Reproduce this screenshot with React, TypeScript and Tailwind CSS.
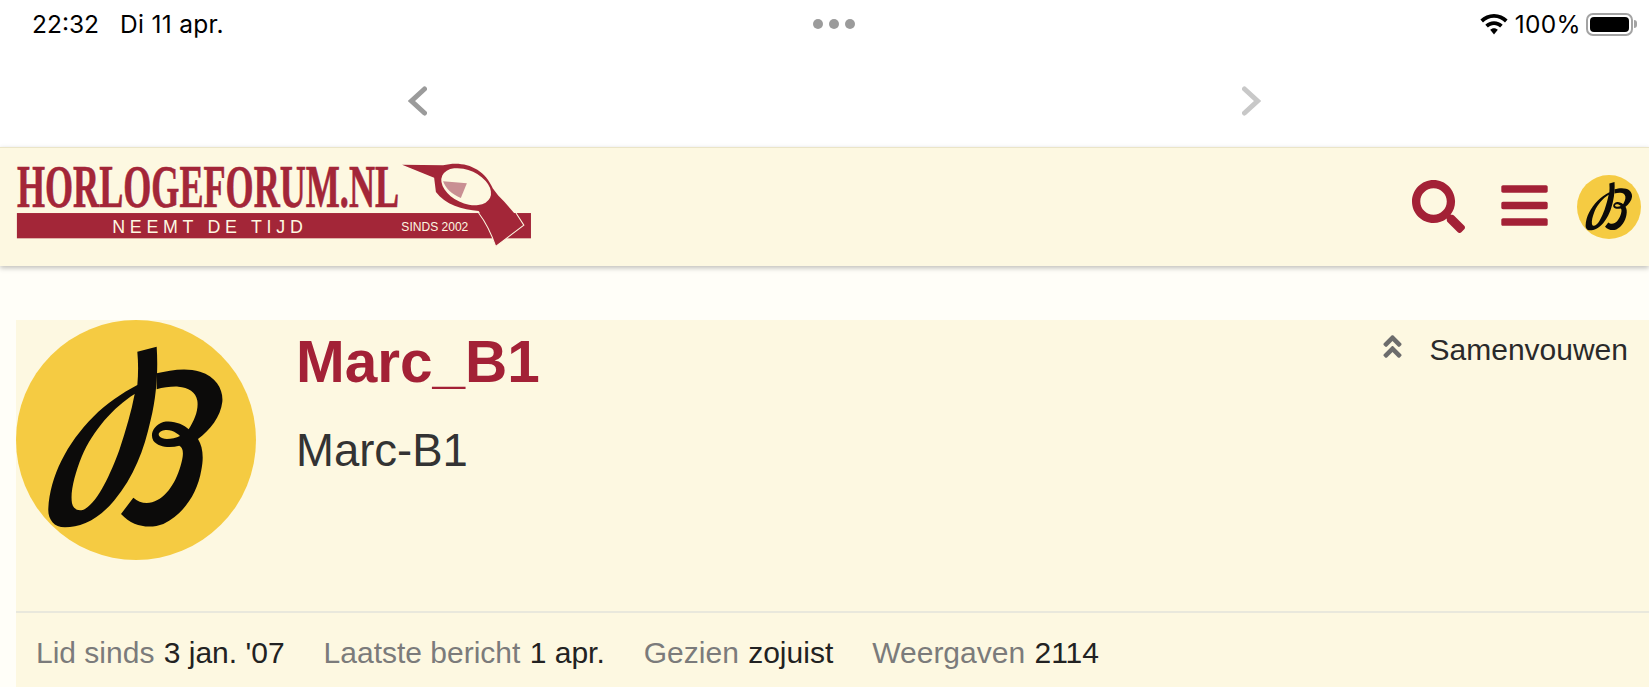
import { FaAngleDoubleUp, FaBars, FaSearch } from 'react-icons/fa';

const sans = 'font-["Liberation_Sans",Arial,sans-serif]';

function BLetter() {
  return (
    <svg viewBox="48 30 720 720" className="block h-full w-full">
      <circle cx="408" cy="390" r="360" fill="#f5cb42" />
      <path
        fillRule="evenodd"
        fill="#0c0b0a"
        d="M412 125 L470 110 C474 170 472 250 452 330 C432 420 402 500 342 572 C292 632 240 652 195 652 C160 652 143 625 145 595 C150 500 200 400 280 320 C320 280 365 250 412 225 C415 190 415 160 412 125 Z M404 252 C340 292 280 360 245 440 C225 490 210 545 216 580 C220 600 240 606 256 596 C296 572 332 490 358 420 C378 360 394 305 404 252 Z"
      />
      <path
        fillRule="evenodd"
        fill="#0c0b0a"
        d="M470 190 C510 180 560 172 600 185 C650 200 670 240 667 275 C662 320 630 360 594 387 C608 410 612 440 604 480 C592 550 552 612 490 642 C450 657 400 652 363 612 L400 563 C420 581 448 584 472 570 C512 550 540 490 548 440 C550 424 548 412 538 407 C510 414 475 412 460 392 C448 370 463 345 490 336 C520 330 550 343 566 358 C584 330 596 300 592 272 C588 246 565 232 535 230 C515 229 490 232 470 238 Z M476 372 C480 360 500 358 515 362 C525 366 535 372 540 378 C525 385 500 390 488 385 C480 382 476 378 476 372 Z"
      />
    </svg>
  );
}

function Logo() {
  return (
    <svg viewBox="48 75 1450 250" className="block h-[89px] w-[520px] overflow-visible">
      <text
        transform="translate(48 208) scale(0.57 0.95)"
        fontFamily="Liberation Serif"
        fontWeight="700"
        fontSize="178"
        stroke="#a32638"
        strokeWidth="2"
        fill="#a32638"
      >
        HORLOGEFORUM.NL
      </text>
      <rect x="48" y="224" width="1444" height="71" fill="#a32638" />
      <text x="316" y="279" fontFamily="Liberation Sans" fontSize="50" textLength="535" fill="#fdf8e1">
        NEEMT DE TIJD
      </text>
      <text x="1128" y="274" fontFamily="Liberation Sans" fontSize="36" textLength="188" lengthAdjust="spacingAndGlyphs" fill="#fdf8e1">
        SINDS 2002
      </text>
      <path
        d="M1130 88 L1245 90 C1300 75 1360 95 1385 155 L1400 175 C1430 205 1455 235 1472 258 L1393 318 C1380 280 1365 250 1345 218 C1300 215 1250 200 1225 165 L1220 125 Z"
        fill="#a32638"
      />
      <path d="M1345 224 C1365 250 1380 280 1393 318 L1472 258 L1450 224" fill="none" stroke="#fdf8e1" strokeWidth="3" />
      <ellipse cx="1310" cy="150" rx="74" ry="46" transform="rotate(25 1310 150)" fill="#fdf8e1" />
      <path d="M1245 135 L1312 140 L1295 182 C1270 172 1252 155 1245 135 Z" fill="#c98f93" />
    </svg>
  );
}

function Stat({ label, value }: { label: string; value: string }) {
  return (
    <span>
      <span className="mr-px text-[#7b7b7b]">{label}</span> <span className="text-[#222222]">{value}</span>
    </span>
  );
}

export default function App() {
  return (
    <div className={`${sans} flex h-[687px] flex-col overflow-hidden bg-[#fffef8]`}>
      <div className="grid h-[48px] grid-cols-3 items-center bg-white px-8 font-['Inter',sans-serif] text-[24.5px] text-black">
        <div className="flex gap-[21px]">
          <span>22:32</span>
          <span className="tracking-[0.3px]">Di 11 apr.</span>
        </div>
        <div className="ml-[20px] flex justify-center gap-[6px]">
          <span className="h-[10px] w-[10px] rounded-full bg-[#9b9b9b]" />
          <span className="h-[10px] w-[10px] rounded-full bg-[#9b9b9b]" />
          <span className="h-[10px] w-[10px] rounded-full bg-[#9b9b9b]" />
        </div>
        <div className="-mr-5 flex items-center justify-end gap-[5px]">
          <svg viewBox="0 0 28 21" className="mr-[2px] h-[21px] w-[28px]" fill="#000000">
            <path d="M14 0 C8.6 0 4 2.1 0.4 5.6 L3 8.4 C6 5.5 9.8 3.8 14 3.8 C18.2 3.8 22 5.5 25 8.4 L27.6 5.6 C24 2.1 19.4 0 14 0 Z" />
            <path d="M14 7.2 C10.6 7.2 7.6 8.5 5.3 10.8 L7.9 13.5 C9.5 11.9 11.6 11 14 11 C16.4 11 18.5 11.9 20.1 13.5 L22.7 10.8 C20.4 8.5 17.4 7.2 14 7.2 Z" />
            <path d="M14 14.2 C12.5 14.2 11.2 14.8 10.2 15.8 L14 20.4 L17.8 15.8 C16.8 14.8 15.5 14.2 14 14.2 Z" />
          </svg>
          <span className="tracking-[0.3px]">100%</span>
          <div className="flex items-center gap-px">
            <div className="flex h-[23px] w-[47px] rounded-[7px] border-2 border-[#a3a3a3] p-[2px]">
              <div className="flex-1 rounded-[4px] bg-black" />
            </div>
            <div className="h-[8px] w-[3px] rounded-r-full bg-[#a3a3a3]" />
          </div>
        </div>
      </div>

      <div className="flex h-[99px] items-center justify-between bg-white pt-[6px] pr-[388px] pl-[408px]">
        <svg viewBox="0 0 19 30" className="h-[30px] w-[19px]" fill="none" stroke="#9b9b9b" strokeWidth="5" strokeLinecap="round" strokeLinejoin="miter">
          <polyline points="16.5,3 3.5,15 16.5,27" />
        </svg>
        <svg viewBox="0 0 19 30" className="h-[30px] w-[19px]" fill="none" stroke="#c8c8c8" strokeWidth="5" strokeLinecap="round" strokeLinejoin="miter">
          <polyline points="2.5,3 15.5,15 2.5,27" />
        </svg>
      </div>

      <header className="relative flex h-[119px] shrink-0 items-start justify-between border-t border-[#ebe5c8] bg-[#fdf8e1] pl-[15px] shadow-[0_2px_5px_rgba(0,0,0,0.25)]">
        <div className="pt-[12px]">
          <Logo />
        </div>
        <div className="flex items-center pt-[27px] pr-2 text-[#a32136]">
          <FaSearch size={53} className="mb-[2px]" />
          <FaBars size={53} className="mb-[4px] ml-[33px]" />
          <div className="ml-[26px] h-[64px] w-[64px]">
            <BLetter />
          </div>
        </div>
      </header>

      <main className="mt-[54px] ml-4 flex flex-1 flex-col bg-[#fdf8e1]">
        <div className="flex h-[293px] border-b-2 border-[#e9e8dc]">
          <div className="h-[240px] w-[240px] shrink-0">
            <BLetter />
          </div>
          <div className="ml-[40px] flex-1 pt-[9px]">
            <h1 className="text-[58.5px] leading-[66px] font-bold text-[#a32136]">Marc_B1</h1>
            <p className="mt-[30px] text-[45.5px] leading-[52px] text-[#333333]">Marc-B1</p>
          </div>
          <button className="flex h-[58px] items-center gap-[23px] pr-[21px] text-[30px] text-[#2a2a2a]">
            <FaAngleDoubleUp size={29} className="mb-[6px] text-[#6c6c6c]" />
            Samenvouwen
          </button>
        </div>
        <div className="flex gap-[39px] pt-[19px] pl-5 text-[30px] leading-[42px]">
          <Stat label="Lid sinds" value="3 jan. '07" />
          <Stat label="Laatste bericht" value="1 apr." />
          <Stat label="Gezien" value="zojuist" />
          <Stat label="Weergaven" value="2114" />
        </div>
      </main>
    </div>
  );
}
